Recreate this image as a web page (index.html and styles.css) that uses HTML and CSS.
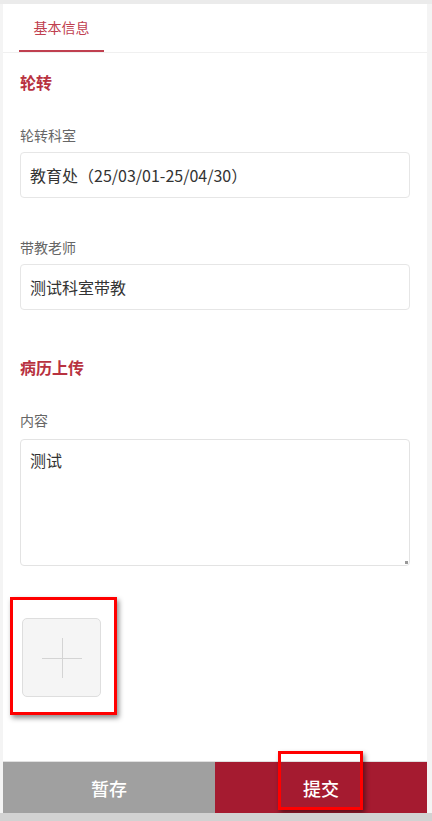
FILE: index.html
```html
<!DOCTYPE html>
<html lang="zh">
<head>
<meta charset="utf-8">
<title>病历上传</title>
<link rel="stylesheet" href="styles.css">
</head>
<body>
<div class="page">
  <div class="tabs">
    <div class="tab active">基本信息</div>
  </div>
  <div class="content">
    <div class="section-title first">轮转</div>
    <div class="label">轮转科室</div>
    <div class="field">教育处（25/03/01-25/04/30）</div>
    <div class="label gap">带教老师</div>
    <div class="field">测试科室带教</div>
    <div class="section-title second">病历上传</div>
    <div class="label">内容</div>
    <div class="textarea">测试<span class="grip"></span></div>
    <div class="upload-wrap">
      <div class="upload">
        <span class="plus-h"></span>
        <span class="plus-v"></span>
      </div>
      <div class="mark mark-upload"></div>
    </div>
  </div>
  <div class="footer">
    <div class="btn save">暂存</div>
    <div class="btn submit">提交<div class="mark mark-submit"></div></div>
  </div>
</div>
</body>
</html>
```

FILE: styles.css
```css
* { box-sizing: border-box; }
html, body { margin: 0; padding: 0; }
body {
  background: #f4f4f4;
  font-family: "Noto Sans CJK SC", "Noto Sans", sans-serif;
  width: 432px;
  height: 821px;
  overflow: hidden;
  border-bottom: 8px solid #d2d2d2;
}
.page {
  margin: 4px 5px 0 3px;
  height: 809px;
  background: #fff;
  display: flex;
  flex-direction: column;
  position: relative;
}
body::before {
  content: "";
  position: absolute;
  left: 0; top: 0;
  width: 432px; height: 4px;
  background: #ebebeb;
}
.tabs {
  height: 49px;
  border-bottom: 1px solid #f0f0f0;
  display: flex;
  padding-left: 16px;
}
.tab {
  width: 85px;
  text-align: center;
  font-size: 14px;
  line-height: 47px;
  color: #c0404f;
}
.tab.active { border-bottom: 2px solid #c0404f; }
.content {
  flex: 1;
  padding: 0 17px;
}
.section-title {
  font-size: 16px;
  font-weight: 700;
  color: #b8323f;
  line-height: 24px;
}
.section-title.first { margin-top: 17px; }
.section-title.second { margin-top: 45px; }
.label {
  font-size: 14px;
  line-height: 20px;
  color: #666;
  margin-top: 31px;
}
.label.gap { margin-top: 39px; }
.field {
  margin-top: 7px;
  height: 46px;
  border: 1px solid #e6e6e6;
  border-radius: 4px;
  padding: 0 9px;
  font-size: 16px;
  line-height: 44px;
  color: #333;
}
.textarea {
  margin-top: 9px;
  height: 127px;
  border: 1px solid #e3e3e3;
  border-radius: 4px;
  padding: 8px 9px;
  font-size: 16px;
  line-height: 24px;
  color: #333;
  position: relative;
}
.grip {
  position: absolute;
  right: 1px; bottom: 1px;
  width: 3px; height: 3px;
  background: #999;
}
.upload-wrap {
  margin-top: 52px;
  position: relative;
  padding-left: 2px;
}
.upload {
  width: 79px;
  height: 79px;
  background: #f5f5f5;
  border: 1px solid #dedede;
  border-radius: 5px;
  position: relative;
}
.plus-h {
  position: absolute;
  left: 19px; top: 39px;
  width: 40px; height: 1px;
  background: #d4d4d4;
}
.plus-v {
  position: absolute;
  left: 39px; top: 19px;
  width: 1px; height: 40px;
  background: #d4d4d4;
}
.mark {
  position: absolute;
  border: 3px solid #ff0000;
  box-shadow: 2px 3px 5px rgba(0,0,0,0.45);
}
.mark-upload {
  left: -10px; top: -21px;
  width: 107px; height: 118px;
}
.footer {
  height: 52px;
  display: flex;
  border-top: 1px solid #e0e0e0;
}
.btn {
  flex: 1;
  display: flex;
  align-items: center;
  justify-content: center;
  color: #fff;
  font-size: 18px;
  font-weight: 500;
  position: relative;
}
.save { background: #a0a0a0; }
.submit { background: #a51b30; }
.mark-submit {
  left: 63px; top: -11px;
  width: 85px; height: 59px;
}
```
